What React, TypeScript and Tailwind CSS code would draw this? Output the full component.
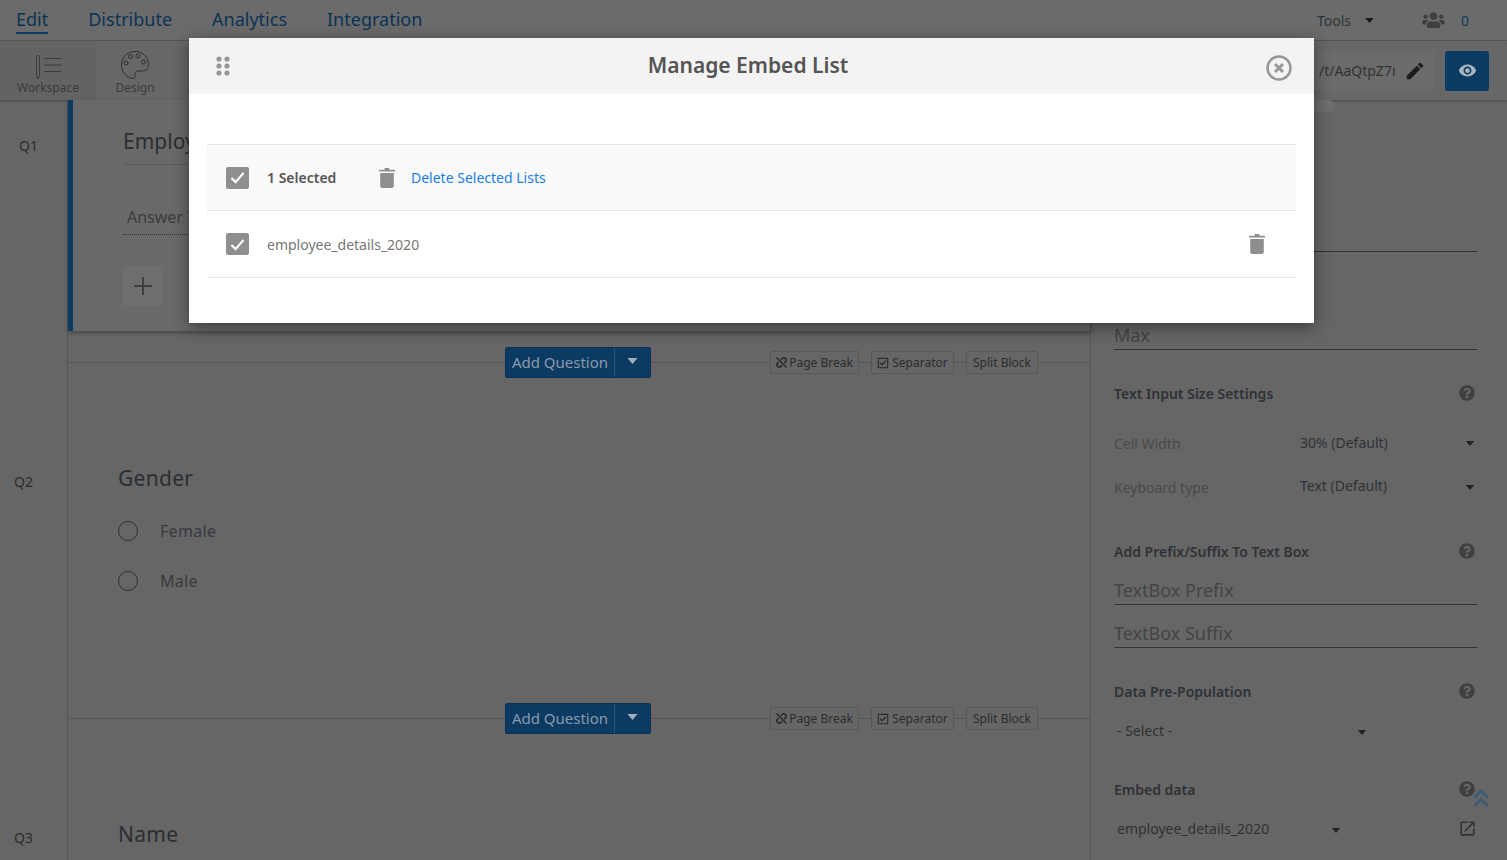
import React from "react";
import { ChevronsUp } from "lucide-react";
import { FaQuestionCircle, FaRegCheckSquare, FaUnlink, FaUsers } from "react-icons/fa";
import { MdEdit, MdOpenInNew, MdVisibility } from "react-icons/md";

function Caret({ className }: { className: string }) {
  return (
    <svg viewBox="0 0 10 6" className={className} fill="currentColor">
      <path d="M0 0h10L5 6z" />
    </svg>
  );
}

function Trash({ className }: { className: string }) {
  return (
    <svg viewBox="0 0 16 20" className={className} fill="#8e8e8e">
      <path d="M5.5 1.2c0-.7.5-1.2 1.2-1.2h2.6c.7 0 1.2.5 1.2 1.2v.6H15c.6 0 1 .4 1 1v.7H0v-.7c0-.6.4-1 1-1h4.5z" />
      <path d="M1.2 5h13.6v13c0 1.1-.9 2-2 2H3.2c-1.1 0-2-.9-2-2z" />
    </svg>
  );
}

function Check() {
  return (
    <span className="flex h-[22px] w-[23px] items-center justify-center rounded-[2px] bg-[#8f8f8f]">
      <svg viewBox="0 0 16 14" className="h-[13px] w-[15px]" fill="none" stroke="#fff" strokeWidth="2.4">
        <path d="M1.5 7.5l4.5 4.5L14.5 2" />
      </svg>
    </span>
  );
}

function Help() {
  return <FaQuestionCircle className="h-4 w-4 text-[#3f3f3f]" />;
}

function ActionRow() {
  return (
    <div className="flex h-[31px] items-center">
      <div className="h-px w-[437px] bg-[#565656]" />
      <div className="flex h-[31px] w-[146px] rounded-[2px] border border-[#0a3155] bg-[#0b3a63] text-[15px] text-[#8a9aaa]">
        <span className="flex w-[109px] items-center justify-center border-r border-[#2f5679]">Add Question</span>
        <span className="flex flex-1 items-center justify-center pb-1">
          <Caret className="h-[6px] w-[11px] text-[#a4afba]" />
        </span>
      </div>
      <div className="h-px w-[119px] bg-[#565656]" />
      <div className="flex h-[23px] w-[89px] items-center justify-center gap-[2px] rounded-[2px] border border-[#585858] text-[12px] text-[#2c2c2c]">
        <FaUnlink className="h-[11px] w-[11px]" />
        Page Break
      </div>
      <div className="h-px w-3 bg-[#565656]" />
      <div className="flex h-[23px] w-[83px] items-center justify-center gap-[3px] rounded-[2px] border border-[#585858] text-[12px] text-[#2c2c2c]">
        <FaRegCheckSquare className="h-3 w-3" />
        Separator
      </div>
      <div className="h-px w-3 bg-[#565656]" />
      <div className="flex h-[23px] w-[72px] items-center justify-center rounded-[2px] border border-[#585858] text-[12px] text-[#2c2c2c]">
        Split Block
      </div>
      <div className="h-px flex-1 bg-[#565656]" />
    </div>
  );
}

function Radio({ label }: { label: string }) {
  return (
    <div className="flex h-6 items-center gap-[22px]">
      <span className="h-5 w-5 rounded-full border border-[#2e2e2e]" />
      <span className="text-[16px] tracking-[0.3px] text-[#383b3f]">{label}</span>
    </div>
  );
}

export default function App() {
  return (
    <div
      className="relative flex h-[860px] w-[1507px] flex-col overflow-hidden bg-[#666666] text-[#2f3234]"
      style={{ fontFamily: '"Noto Sans", "Open Sans", sans-serif' }}
    >
      <header className="flex h-[41px] shrink-0 items-center justify-between border-b border-[#5a5a5a] bg-[#6b6b6b] pl-[16px] pr-[38px]">
        <nav className="flex gap-10 text-[18px] text-[#0b3355]">
          <span className="border-b-2 border-[#0b3a63] leading-[26px]">Edit</span>
          <span className="leading-[26px]">Distribute</span>
          <span className="leading-[26px]">Analytics</span>
          <span className="leading-[26px]">Integration</span>
        </nav>
        <div className="flex items-center text-[14px]">
          <span className="text-[#2d3438]">Tools</span>
          <Caret className="ml-[14px] h-[5px] w-[9px] text-[#161616]" />
          <FaUsers className="ml-[46px] h-[18px] w-[27px] text-[#3f3f3f]" />
          <span className="ml-[14px] text-[#0b3a63]">0</span>
        </div>
      </header>

      <div className="flex h-[59px] shrink-0 items-center bg-[#676767] shadow-[0_1px_3px_rgba(0,0,0,0.3)]">
        <div className="flex h-full w-[96px] flex-col items-center justify-end bg-[#636363] pb-[4px]">
          <svg viewBox="0 0 28 26" className="h-[26px] w-[29px]" fill="none" stroke="#3a3a3a" strokeWidth="1">
            <path d="M2 2.5c0-1.5 3-1.5 3 0v19l-1.5 3.5L2 21.500z" />
            <path d="M10 4.500h17M10 11h17M10 17.500h17" />
          </svg>
          <span className="text-[12px] leading-[16px] text-[#383c40]">Workspace</span>
        </div>
        <div className="flex h-full w-[78px] flex-col items-center justify-end pb-[4px]">
          <svg viewBox="0 0 30 30" className="h-[30px] w-[30px]" fill="none" stroke="#303030" strokeWidth="1">
            <path d="M15 1.500C7 1.500 1.500 7.500 1.500 15c0 7 5.500 13.500 11.500 13.500 2 0 2.500-1.500 2-3-.8-2.200.5-4.500 3-4.500h5c3 0 5.500-2 5.500-6C28.500 7 23 1.500 15 1.500z" />
            <circle cx="10.500" cy="6.500" r="2" />
            <circle cx="18" cy="6" r="2" />
            <circle cx="23.500" cy="12" r="2" />
            <circle cx="6" cy="13" r="2" />
          </svg>
          <span className="text-[12px] leading-[16px] text-[#383c40]">Design</span>
        </div>
        <div className="ml-auto flex items-center pr-[18px]">
          <div className="flex h-10 w-[140px] items-center justify-end gap-[9px] overflow-hidden rounded-[4px] bg-[#6b6b6b] pr-[9px] text-[14px]">
            <span className="w-[76px] overflow-hidden whitespace-nowrap">/t/AaQtpZ7n</span>
            <MdEdit className="h-[22px] w-[22px] text-[#1c1c1c]" />
          </div>
          <div className="ml-[10px] flex h-10 w-[44px] items-center justify-center rounded-[3px] bg-[#0b3a63]">
            <MdVisibility className="h-[19px] w-[19px] text-[#a9b4bf]" />
          </div>
        </div>
      </div>

      <div className="flex min-h-0 flex-1">
        <main className="w-[1091px] border-r border-[#575757]">
          <section className="flex h-[247px]">
            <div className="w-[68px] border-r border-[#575757] pl-[19px] pt-[36px] text-[14px] leading-5 text-[#2c2c2c]">Q1</div>
            <div className="flex-1">
              <div className="h-[231px] border-l-[5px] border-[#0b3a63] bg-[#696969] pl-[50px] shadow-[0_2px_4px_rgba(0,0,0,0.3)]">
                <div className="mt-[0px] h-[65px] w-[400px] border-b border-[#5a5a5a] pt-[26px] text-[21px] leading-[30px] text-[#2b2e31]">Employee ID</div>
                <div className="mt-[40px] h-[30px] w-[300px] border-b border-dotted border-[#333] pl-1 text-[16px] leading-6 text-[#3a3d40]">Answer Text</div>
                <div className="mt-[31px] flex h-10 w-10 items-center justify-center bg-[#6e6e6e] text-[#3f3f3f]">
                  <svg viewBox="0 0 18 18" className="h-[18px] w-[18px]" stroke="currentColor" strokeWidth="2">
                    <path d="M9 0v18M0 9h18" />
                  </svg>
                </div>
              </div>
            </div>
          </section>

          <section className="flex h-[356px]">
            <div className="w-[68px] border-r border-[#575757] pl-[14px] pt-[125px] text-[14px] leading-5 text-[#2c2c2c]">Q2</div>
            <div className="flex-1">
              <ActionRow />
              <div className="pl-[50px]">
                <div className="mt-[85px] text-[21px] leading-[30px] tracking-[0.3px] text-[#2b2e31]">Gender</div>
                <div className="mt-[26px]"><Radio label="Female" /></div>
                <div className="mt-[26px]"><Radio label="Male" /></div>
              </div>
            </div>
          </section>

          <section className="flex h-[157px]">
            <div className="w-[68px] border-r border-[#575757] pl-[14px] pt-[125px] text-[14px] leading-5 text-[#2c2c2c]">Q3</div>
            <div className="flex-1">
              <ActionRow />
              <div className="mt-[85px] pl-[50px] text-[21px] leading-[30px] tracking-[0.3px] text-[#2b2e31]">Name</div>
            </div>
          </section>
        </main>

        <aside className="relative flex-1 pl-[23px] pr-[30px] text-[14px]">
          <div className="-ml-[23px] -mr-[30px] pr-[172px]">
            <div className="h-3 rounded-b-full rounded-r-full bg-[#6e6e6e]" />
          </div>
          <div className="h-[140px] border-b border-[#333]" />
          <div className="flex h-[98px] items-end border-b border-[#333] pb-[2px] text-[18px] leading-6 text-[#444]">Max</div>
          <div className="mt-[31px] flex h-6 items-center justify-between pr-[2px] font-semibold text-[#2e3236]">
            Text Input Size Settings
            <Help />
          </div>
          <div className="mt-[26px] flex h-6 items-center text-[#4a4a4a]">
            <span className="w-[186px]">Cell Width</span>
            <span className="-mt-[2px] flex-1 text-[#2f3234]">30% (Default)</span>
            <Caret className="mr-[2px] h-[5px] w-[10px] text-[#222]" />
          </div>
          <div className="mt-[20px] flex h-6 items-center text-[#4a4a4a]">
            <span className="w-[186px]">Keyboard type</span>
            <span className="-mt-[4px] flex-1 text-[#2f3234]">Text (Default)</span>
            <Caret className="mr-[2px] h-[5px] w-[10px] text-[#222]" />
          </div>
          <div className="mt-[40px] flex h-6 items-center justify-between pr-[2px] font-semibold text-[#2e3236]">
            Add Prefix/Suffix To Text Box
            <Help />
          </div>
          <div className="mt-[12px] flex h-[30px] items-end border-b border-[#333] pb-[2px] text-[18px] leading-6 text-[#444]">TextBox Prefix</div>
          <div className="mt-[13px] flex h-[30px] items-end border-b border-[#333] pb-[2px] text-[18px] leading-6 text-[#444]">TextBox Suffix</div>
          <div className="mt-[31px] flex h-6 items-center justify-between pr-[2px] font-semibold text-[#2e3236]">
            Data Pre-Population
            <Help />
          </div>
          <div className="mt-[15px] flex h-6 w-[253px] items-center justify-between pl-[3px] text-[#2f3234]">
            - Select -
            <Caret className="mt-1 h-[5px] w-[10px] text-[#222]" />
          </div>
          <div className="mt-[35px] flex h-6 items-center justify-between pr-[2px] font-semibold text-[#2e3236]">
            Embed data
            <Help />
          </div>
          <div className="mt-[15px] flex h-6 items-center pl-[3px] text-[#2f3234]">
            <span className="w-[214px]">employee_details_2020</span>
            <Caret className="mt-1 h-[5px] w-[10px] text-[#222]" />
            <MdOpenInNew className="ml-auto h-[19px] w-[19px] text-[#333]" />
          </div>
          <ChevronsUp className="absolute right-[12px] top-[684px] h-7 w-7 text-[#3d5a75]" strokeWidth={2.5} />
        </aside>
      </div>

      <div className="absolute left-[189px] top-[38px] flex h-[285px] w-[1125px] flex-col bg-white shadow-[0_4px_16px_rgba(0,0,0,0.45)]">
        <div className="flex h-[56px] shrink-0 items-center justify-between bg-[#f3f3f3] pl-[27px] pr-[22px]">
          <svg viewBox="0 0 14 20" className="h-5 w-[14px]" fill="#979797">
            <circle cx="3" cy="3" r="2.600" />
            <circle cx="11" cy="3" r="2.600" />
            <circle cx="3" cy="10" r="2.600" />
            <circle cx="11" cy="10" r="2.600" />
            <circle cx="3" cy="17" r="2.600" />
            <circle cx="11" cy="17" r="2.600" />
          </svg>
          <h1 className="text-[21px] font-semibold text-[#555555]">Manage Embed List</h1>
          <svg viewBox="0 0 26 26" className="mt-[3px] h-[26px] w-[26px]" fill="none" stroke="#979797">
            <circle cx="13" cy="13" r="11.500" strokeWidth="2.500" />
            <path d="M9 9l8 8M17 9l-8 8" strokeWidth="3" />
          </svg>
        </div>
        <div className="mx-[18px] mt-[50px] border-t border-[#e6e6e6]">
          <div className="flex h-[66px] items-center border-b border-[#e6e6e6] bg-[#fafafa] pl-[19px]">
            <Check />
            <span className="ml-[18px] w-[112px] text-[14px] font-semibold text-[#555555]">1 Selected</span>
            <Trash className="h-[20px] w-[16px]" />
            <span className="ml-[16px] text-[14px] text-[#1a7ee6]">Delete Selected Lists</span>
          </div>
          <div className="flex h-[67px] items-center border-b border-[#e6e6e6] pl-[19px] pr-[31px]">
            <Check />
            <span className="ml-[18px] flex-1 text-[14px] text-[#777777]">employee_details_2020</span>
            <Trash className="h-[20px] w-[16px]" />
          </div>
        </div>
      </div>
    </div>
  );
}
